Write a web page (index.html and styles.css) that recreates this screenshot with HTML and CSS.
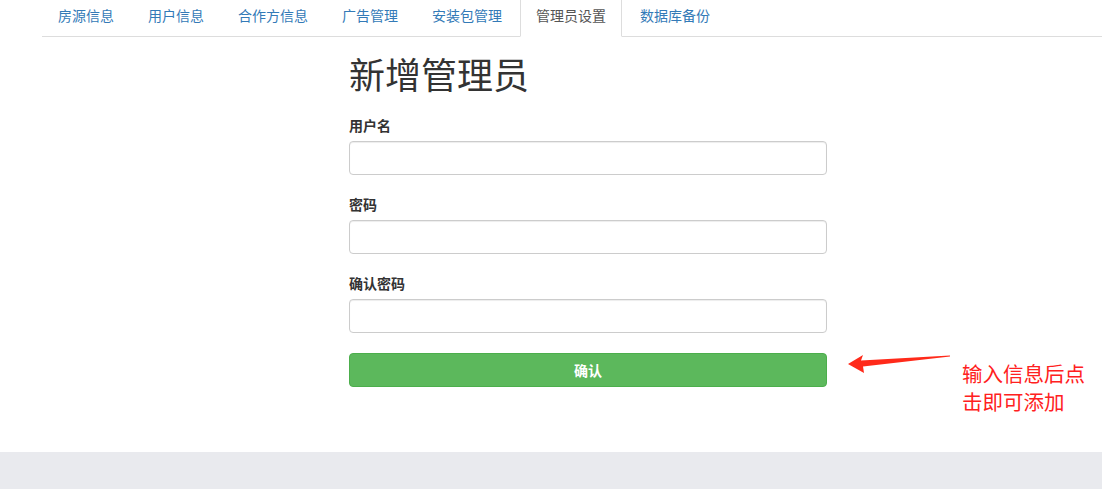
FILE: index.html
```html
<!DOCTYPE html>
<html lang="zh-CN">
  <head>
    <meta charset="UTF-8" />
    <meta name="viewport" content="width=device-width, initial-scale=1.0" />
    <title>新增管理员</title>
    <link rel="stylesheet" href="styles.css">
  </head>
  <body>
    <ul class="nav-tabs">
      <li><a href="#">房源信息</a></li>
      <li><a href="#">用户信息</a></li>
      <li><a href="#">合作方信息</a></li>
      <li><a href="#">广告管理</a></li>
      <li><a href="#">安装包管理</a></li>
      <li class="active"><a href="#">管理员设置</a></li>
      <li><a href="#">数据库备份</a></li>
    </ul>

    <section class="content">
      <h1>新增管理员</h1>
      <form>
        <div class="form-group">
          <label for="username">用户名</label>
          <input type="text" id="username" class="form-control" />
        </div>
        <div class="form-group">
          <label for="password">密码</label>
          <input type="password" id="password" class="form-control" />
        </div>
        <div class="form-group">
          <label for="confirm">确认密码</label>
          <input type="password" id="confirm" class="form-control" />
        </div>
        <div class="submit-row">
          <button type="button" class="btn-success">确认</button>
          <div class="tip">
            <svg class="tip-arrow" width="104" height="22" viewBox="0 0 104 22">
              <polygon points="0,10 15,1 13,6.5 102,1.5 102,2.5 15,12.5 16,19" fill="#ff2a1a" />
            </svg>
            <p class="tip-text">输入信息后点<br />击即可添加</p>
          </div>
        </div>
      </form>
    </section>

    <footer class="footer"></footer>
  </body>
</html>
```

FILE: styles.css
```css
* {
  box-sizing: border-box;
}

body {
  margin: 0;
  font-family: "Liberation Sans", "Noto Sans CJK SC", sans-serif;
  font-size: 14px;
  color: #333;
  background: #fff;
}

.nav-tabs {
  display: flex;
  list-style: none;
  margin: 0 0 0 42px;
  padding: 0;
  height: 37px;
  border-bottom: 1px solid #ddd;
}

.nav-tabs li {
  margin-right: 2px;
  margin-bottom: -1px;
}

.nav-tabs a {
  display: block;
  height: 37px;
  padding: 6px 15px 0;
  line-height: 20px;
  border: 1px solid transparent;
  border-top: none;
  color: #337ab7;
  text-decoration: none;
}

.nav-tabs .active a {
  color: #555;
  background: #fff;
  border-color: #ddd;
  border-bottom-color: #fff;
}

.content {
  width: 478px;
  margin-left: 349px;
}

h1 {
  margin: 20px 0 0;
  font-size: 36px;
  font-weight: 400;
  line-height: 40px;
  color: #333;
}

form {
  margin-top: 19px;
}

.form-group {
  margin-bottom: 20px;
}

label {
  display: block;
  margin-bottom: 5px;
  font-weight: bold;
  line-height: 20px;
}

.form-control {
  display: block;
  width: 100%;
  height: 34px;
  padding: 6px 12px;
  border: 1px solid #ccc;
  border-radius: 4px;
  box-shadow: inset 0 1px 1px rgba(0, 0, 0, 0.075);
  font-size: 14px;
}

.submit-row {
  position: relative;
}

.btn-success {
  display: block;
  width: 100%;
  height: 34px;
  border: 1px solid #4cae4c;
  border-radius: 4px;
  background: #5cb85c;
  color: #fff;
  font-family: inherit;
  font-size: 14px;
  font-weight: bold;
}

.tip {
  position: absolute;
  top: 1px;
  left: 499px;
  width: 260px;
}

.tip-arrow {
  display: block;
}

.tip-text {
  position: absolute;
  top: 7px;
  left: 114px;
  margin: 0;
  width: 140px;
  font-size: 20.5px;
  line-height: 28px;
  color: #ff2020;
}

.footer {
  margin-top: 65px;
  height: 37px;
  background: #e9eaee;
}
```
